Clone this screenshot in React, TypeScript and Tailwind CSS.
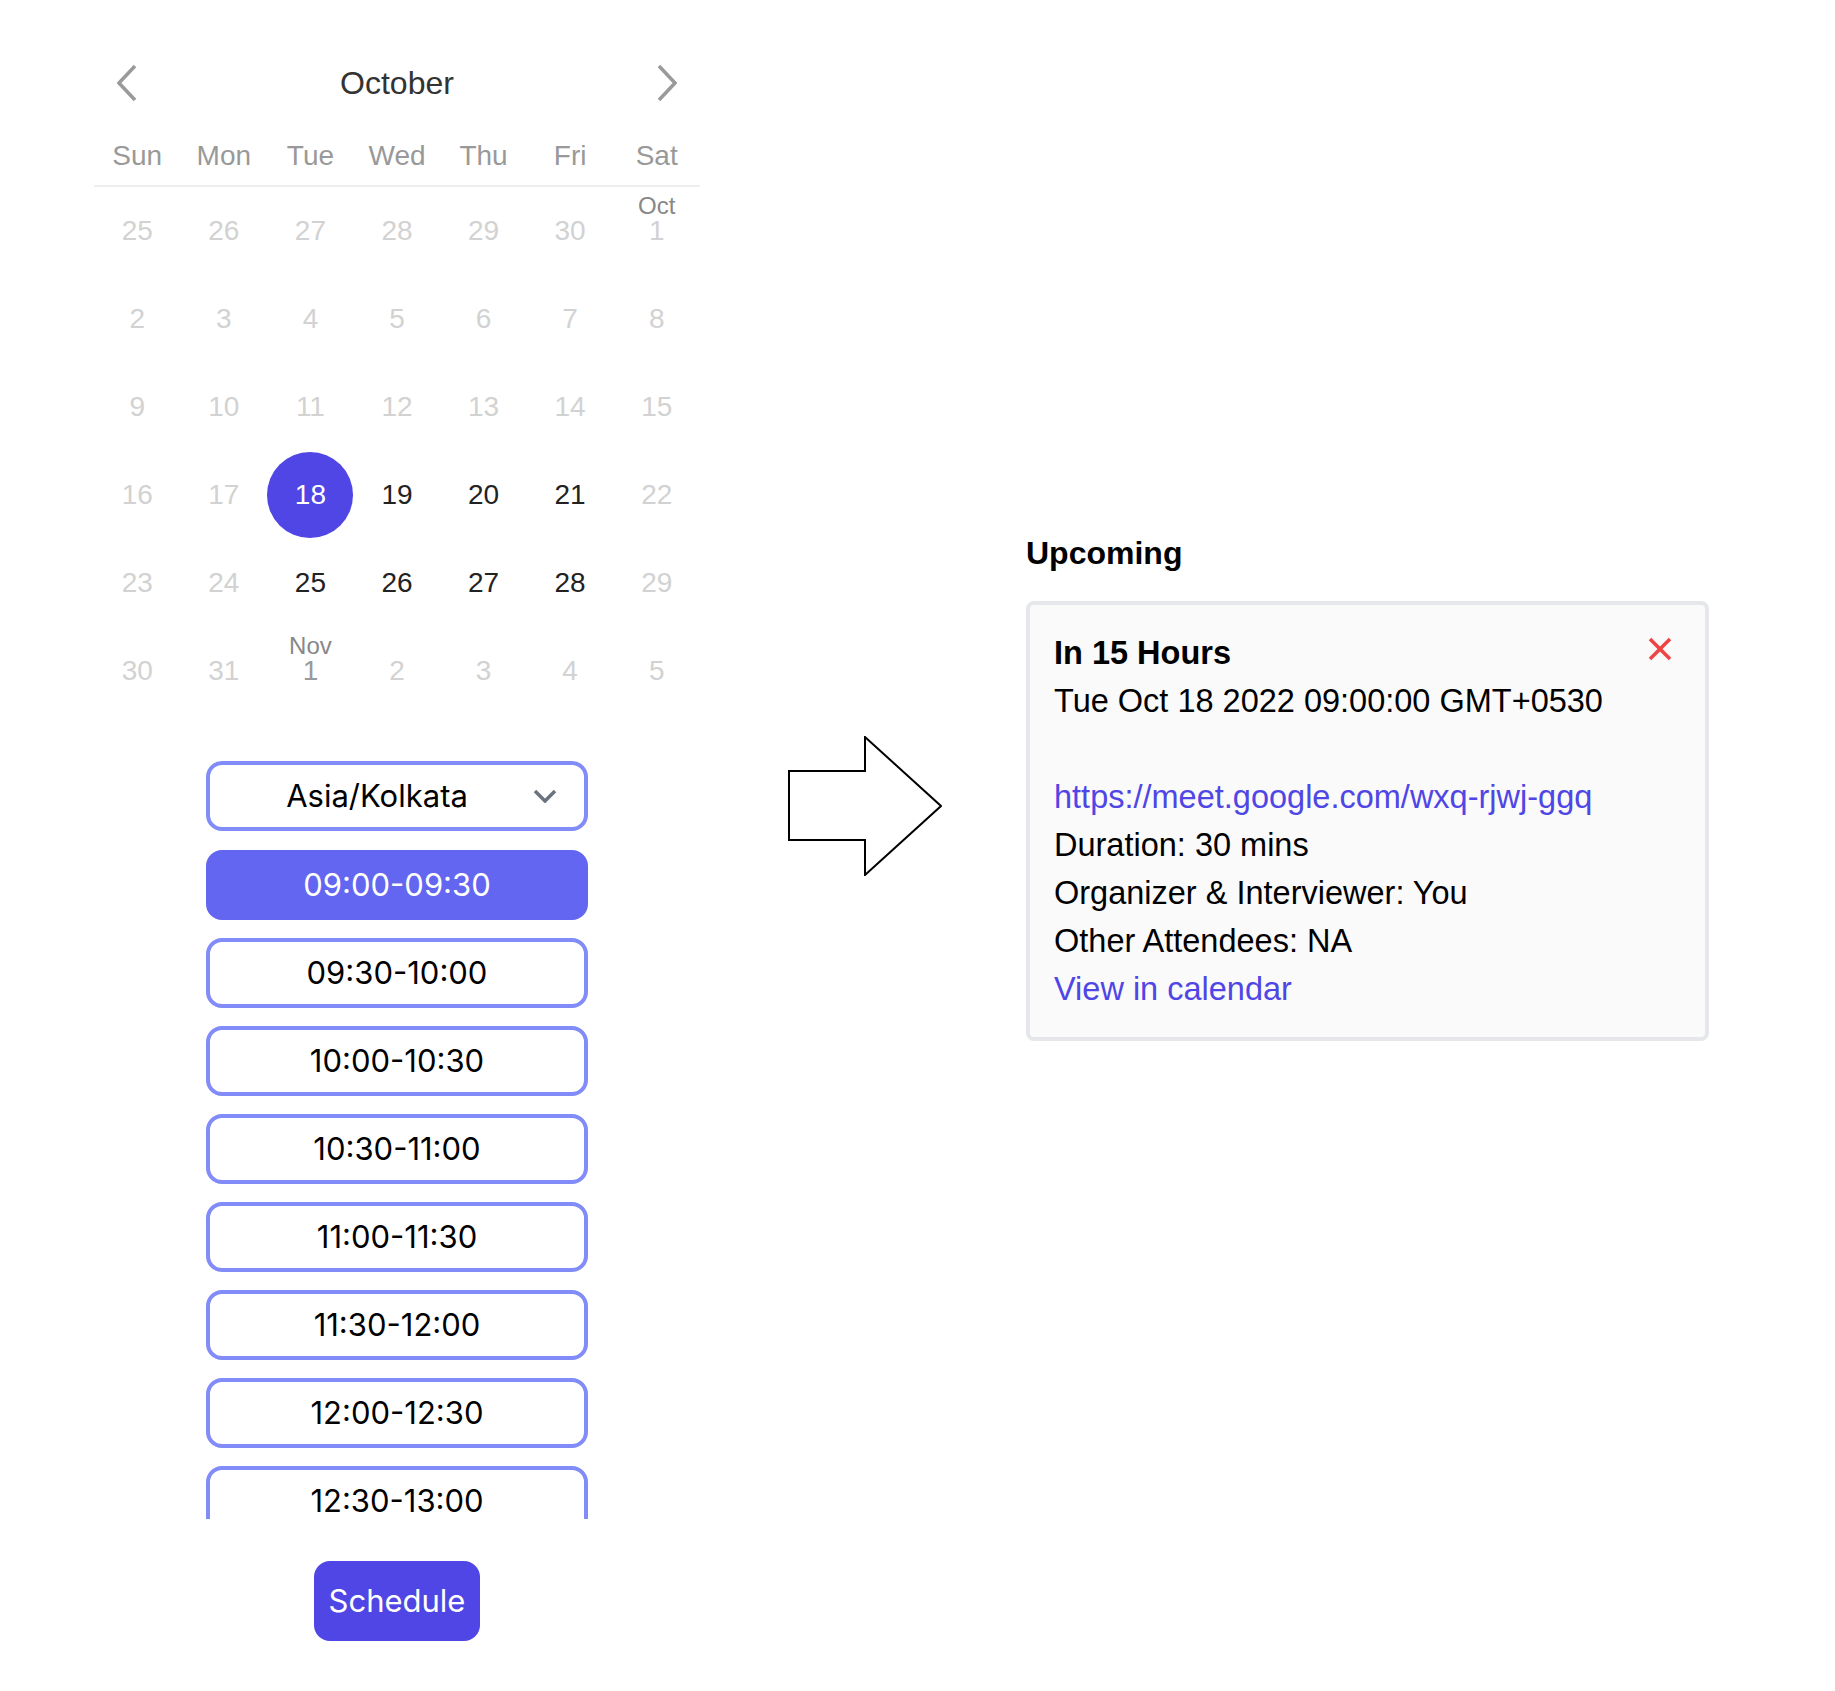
import React from "react";

type Cell = { n: number; tone: "light" | "dark" | "sel" | "mid"; label?: string };

const L = (n: number, label?: string): Cell => ({ n, tone: "light", label });
const D = (n: number): Cell => ({ n, tone: "dark" });

const rows: Cell[][] = [
  [L(25), L(26), L(27), L(28), L(29), L(30), L(1, "Oct")],
  [L(2), L(3), L(4), L(5), L(6), L(7), L(8)],
  [L(9), L(10), L(11), L(12), L(13), L(14), L(15)],
  [L(16), L(17), { n: 18, tone: "sel" }, D(19), D(20), D(21), L(22)],
  [L(23), L(24), D(25), D(26), D(27), D(28), L(29)],
  [L(30), L(31), { n: 1, tone: "mid", label: "Nov" }, L(2), L(3), L(4), L(5)],
];

const days = ["Sun", "Mon", "Tue", "Wed", "Thu", "Fri", "Sat"];

const slots = [
  "09:00-09:30",
  "09:30-10:00",
  "10:00-10:30",
  "10:30-11:00",
  "11:00-11:30",
  "11:30-12:00",
  "12:00-12:30",
  "12:30-13:00",
  "13:00-13:30",
  "13:30-14:00",
];

function DateCell({ c }: { c: Cell }) {
  const color =
    c.tone === "dark"
      ? "text-[#222222]"
      : c.tone === "sel"
      ? "text-white"
      : c.tone === "mid"
      ? "text-[#999999]"
      : "text-[#d2d2d2]";
  return (
    <div className="h-[88px] flex items-center justify-center">
      {c.tone === "sel" ? (
        <div className="w-[86px] h-[86px] rounded-full bg-[#4f46e5] flex items-center justify-center">
          <span className="text-[28px] leading-[32px] text-white">{c.n}</span>
        </div>
      ) : (
        <span className={`relative text-[28px] leading-[32px] ${color}`}>
          {c.label && (
            <span className="absolute left-1/2 -translate-x-1/2 top-[-21px] text-[24px] leading-[24px] text-[#888888] whitespace-nowrap">
              {c.label}
            </span>
          )}
          {c.n}
        </span>
      )}
    </div>
  );
}

export default function App() {
  return (
    <div className="min-h-[1691px] w-[1835px] bg-white flex items-start">
      {/* Left column */}
      <div className="ml-[94px] w-[606px] pt-[39px] flex flex-col" style={{ fontFamily: '"Liberation Sans", Arial, sans-serif' }}>
        <div className="h-[88px] flex items-center justify-between px-[23px]">
          <svg width="20" height="38" viewBox="0 0 20 38" fill="none">
            <polyline points="18,2 2,19 18,36" stroke="#9a9a9a" strokeWidth="3.5" />
          </svg>
          <span className="text-[32px] leading-[40px] text-[#333333]">October</span>
          <svg width="20" height="38" viewBox="0 0 20 38" fill="none">
            <polyline points="2,2 18,19 2,36" stroke="#9a9a9a" strokeWidth="3.5" />
          </svg>
        </div>
        <div className="grid grid-cols-7 h-[60px] items-center border-b-2 border-[#eeeeee]">
          {days.map((d) => (
            <div key={d} className="text-center text-[28px] leading-[32px] text-[#999999]">
              {d}
            </div>
          ))}
        </div>
        <div className="grid grid-cols-7">
          {rows.flat().map((c, i) => (
            <DateCell key={i} c={c} />
          ))}
        </div>

        <div className="flex flex-col items-center mt-[46px]" style={{ fontFamily: 'Inter, "Liberation Sans", sans-serif' }}>
          <div className="w-[382px] h-[70px] border-4 border-[#818cf8] rounded-2xl bg-white flex items-center pl-4 pr-[27px]">
            <span className="flex-1 text-center text-[31px] leading-[40px] text-black">Asia/Kolkata</span>
            <svg className="ml-[5px]" width="24" height="14" viewBox="0 0 24 14" fill="none">
              <polyline points="2,2 12,12 22,2" stroke="#6b7280" strokeWidth="3.5" />
            </svg>
          </div>
          <div className="mt-[19px] h-[669px] overflow-hidden flex flex-col gap-[18px]">
            {slots.map((s, i) => (
              <div
                key={s}
                className={
                  i === 0
                    ? "shrink-0 w-[382px] h-[70px] rounded-2xl border-4 border-[#6366f1] bg-[#6366f1] text-white flex items-center justify-center text-[31px] leading-[40px]"
                    : "shrink-0 w-[382px] h-[70px] rounded-2xl border-4 border-[#818cf8] bg-white text-black flex items-center justify-center text-[31px] leading-[40px]"
                }
              >
                {s}
              </div>
            ))}
          </div>
          <div className="mt-[42px] px-[15px] py-4 rounded-2xl bg-[#4f46e5] text-white text-[31px] leading-[48px]">
            Schedule
          </div>
        </div>
      </div>

      {/* Arrow */}
      <svg className="ml-[88px] mt-[736px] shrink-0" width="154" height="140" viewBox="0 0 154 140" fill="none">
        <polygon points="1,35 77,35 77,1 153,70 77,139 77,104 1,104" fill="white" stroke="black" strokeWidth="2" />
      </svg>

      {/* Right column */}
      <div className="ml-[84px] mt-[529px] w-[683px]" style={{ fontFamily: '"Liberation Sans", Arial, sans-serif' }}>
        <div className="text-[32px] leading-[48px] font-bold text-black mb-6">Upcoming</div>
        <div className="border-4 border-[#e5e7eb] rounded-lg bg-[#fafafa] p-6 text-[32.5px] leading-[48px] text-black">
          <div className="flex items-start justify-between">
            <span className="font-bold">In 15 Hours</span>
            <svg className="mt-[8px] mr-[9px]" width="24" height="24" viewBox="0 0 24 24" fill="none">
              <line x1="2" y1="2" x2="22" y2="22" stroke="#ef4444" strokeWidth="3.5" />
              <line x1="22" y1="2" x2="2" y2="22" stroke="#ef4444" strokeWidth="3.5" />
            </svg>
          </div>
          <div>Tue Oct 18 2022 09:00:00 GMT+0530</div>
          <div className="h-[48px]" />
          <div className="text-[#4f46e5]">https://meet.google.com/wxq-rjwj-ggq</div>
          <div>Duration: 30 mins</div>
          <div>Organizer &amp; Interviewer: You</div>
          <div>Other Attendees: NA</div>
          <div className="text-[#4f46e5]">View in calendar</div>
        </div>
      </div>
    </div>
  );
}
